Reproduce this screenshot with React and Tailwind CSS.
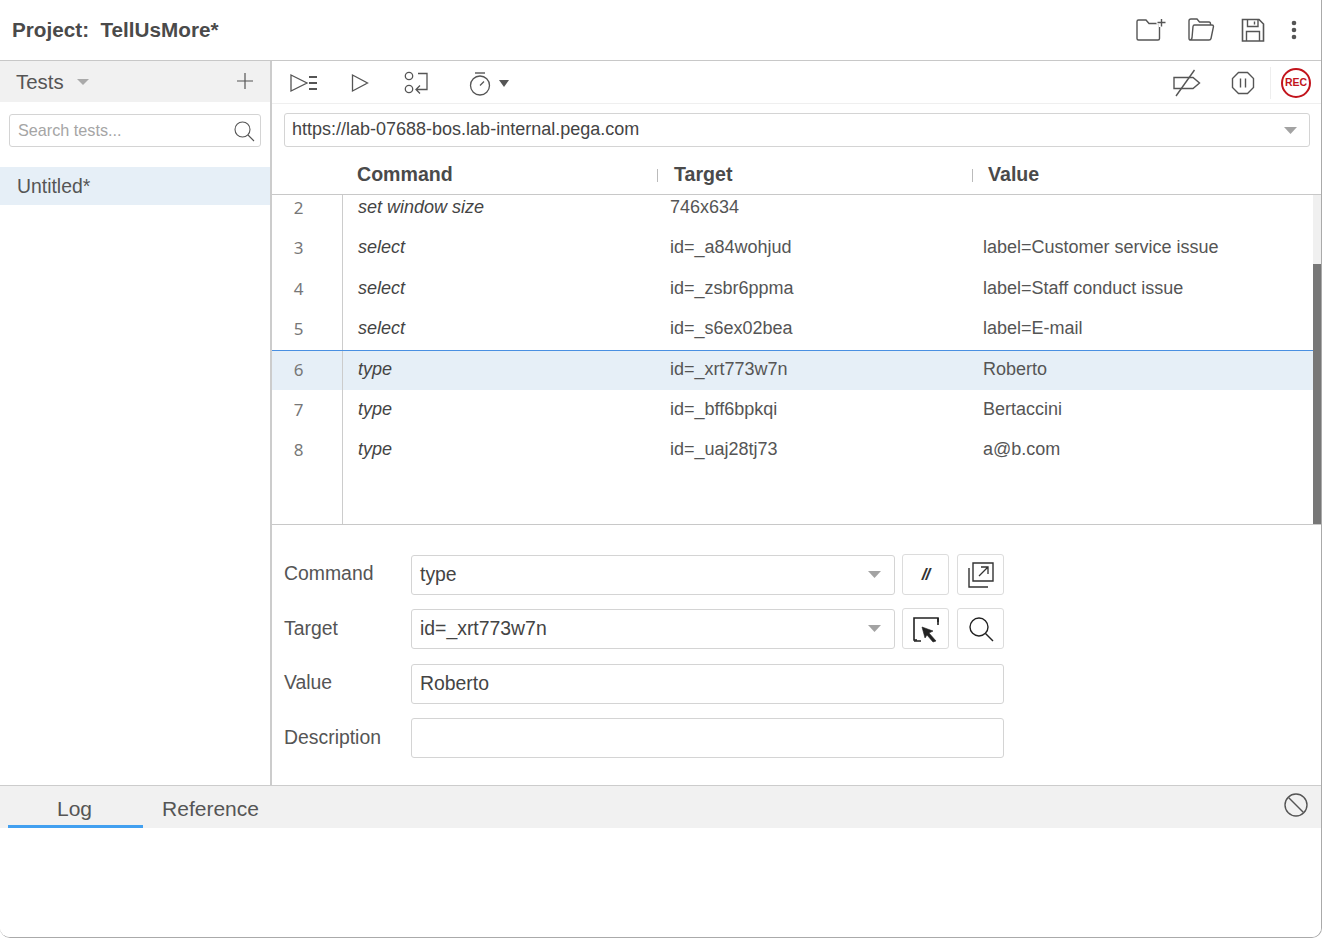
import React from "react";

const Caret = ({ className = "" }) => (
  <svg width="13" height="7" viewBox="0 0 13 7" className={className}><path d="M0 0H13L6.5 7Z" fill="#a3a3a3" /></svg>
);

const Ic = ({ w = 30, h = 30, children, className = "" }) => (
  <svg width={w} height={h} viewBox={`0 0 ${w} ${h}`} fill="none" stroke="#555" strokeWidth="1.5" className={className}>{children}</svg>
);

const rows = [
  ["3", "select", "id=_a84wohjud", "label=Customer service issue"],
  ["4", "select", "id=_zsbr6ppma", "label=Staff conduct issue"],
  ["5", "select", "id=_s6ex02bea", "label=E-mail"],
  ["6", "type", "id=_xrt773w7n", "Roberto", true],
  ["7", "type", "id=_bff6bpkqi", "Bertaccini"],
  ["8", "type", "id=_uaj28tj73", "a@b.com"],
];

function Row({ n, cmd, target, value, selected }) {
  return (
    <div className={`flex items-center shrink-0 h-[40.4px] text-[18px] ${selected ? "bg-[#e6eff7] border-t border-[#4a90e2] box-border" : ""}`}>
      <div className="w-[71px] h-full box-border flex items-center justify-center pr-[17px] pb-[1px] font-['Noto_Sans',sans-serif] text-[17px] text-[#777] border-r border-[#ccc]">{n}</div>
      <div className="w-[327px] pl-[15px] pb-[1.4px] box-border italic text-[#444]">{cmd}</div>
      <div className="w-[313px] pb-[1.4px] box-border text-[#555]">{target}</div>
      <div className="flex-1 pb-[1.4px] box-border text-[#555]">{value}</div>
    </div>
  );
}

const FieldBox = ({ value, caret, w = "w-[484px]", h = "h-[40px]" }) => (
  <div className={`${w} ${h} border border-[#d4d4d4] rounded-[3px] flex items-center justify-between pl-[8px] pr-[13px] text-[19.4px] text-[#444]`}>
    <span>{value}</span>
    {caret && <Caret />}
  </div>
);

const Btn = ({ children, className = "" }) => (
  <div className={`w-[47px] h-[41px] border border-[#dcdcdc] rounded-[3px] flex items-center justify-center ${className}`}>{children}</div>
);

const FormRow = ({ label, children, className = "", labelClass = "" }) => (
  <div className={`flex items-center gap-[8px] ${className}`}>
    <div className={`w-[131px] text-[19.4px] text-[#555] pl-[12px] box-border ${labelClass}`}>{label}</div>
    {children}
  </div>
);

export default function App() {
  return (
    <div className="w-[1322px] h-[938px] bg-white flex flex-col overflow-hidden border-r border-b border-[#aaa] rounded-b-[10px] box-border font-['Liberation_Sans',Arial,sans-serif] text-[#555]">
      <header className="h-[61px] shrink-0 flex items-center justify-between border-b border-[#c8c8c8] box-border pl-[12px] pr-[24px]">
        <div className="font-bold text-[20.7px] text-[#4a4a4a] whitespace-pre">Project:  TellUsMore*</div>
        <div className="flex items-center">
          <Ic w={32} h={28}>
            <path d="M2 5.5Q2 4 3.5 4H11L14 7.5H24.5V22.5Q24.5 24 23 24H3.5Q2 24 2 22.5Z" strokeWidth="1.4" />
            <path d="M26 2V11M21.5 6.5H31" stroke="white" strokeWidth="4" />
            <path d="M26.5 3V10.5M22.5 6.5H30.5" strokeWidth="1.4" />
          </Ic>
          <Ic w={28} h={28} className="ml-[20px]">
            <path d="M3 24Q2 24 2 22V5Q2 3 4 3H10L12.5 6H22Q23.5 6 23.5 8V9" strokeWidth="1.4" />
            <path d="M7.5 9H25Q26.5 9 26.5 10.5L24 22.5Q23.7 24 22 24H3Q4.5 24 5 22L6 10.5Q6.2 9 7.5 9Z" strokeWidth="1.4" />
          </Ic>
          <Ic w={24} h={26} className="ml-[26px]">
            <path d="M1.5 2.5H18L22.5 7V24H1.5Z" strokeWidth="1.6" />
            <path d="M6.5 2.5V9.5H17V2.5M13.5 4.5V7.5" strokeWidth="1.4" />
            <path d="M5.5 24V14.5H18.5V24" strokeWidth="1.4" />
          </Ic>
          <svg width="6" height="20" viewBox="0 0 6 20" className="ml-[26px]" fill="#555"><circle cx="3" cy="3" r="2.3" /><circle cx="3" cy="10" r="2.3" /><circle cx="3" cy="17" r="2.3" /></svg>
        </div>
      </header>

      <div className="flex h-[724px] shrink-0">
        <aside className="w-[272px] shrink-0 border-r-2 border-[#ccc] box-border flex flex-col">
          <div className="h-[41px] bg-[#f1f1f1] flex items-center justify-between pl-[16px] pr-[17px]">
            <div className="flex items-center gap-[13px] pt-[2px]">
              <span className="text-[20.4px] text-[#555]">Tests</span>
              <svg width="12" height="6" viewBox="0 0 12 6"><path d="M0 0H12L6 6Z" fill="#aaa" /></svg>
            </div>
            <svg width="16" height="16" viewBox="0 0 16 16" stroke="#555" strokeWidth="1.2" className="-mt-[2px]"><path d="M8 0V16M0 8H16" /></svg>
          </div>
          <div className="mt-[12px] mx-[9px] h-[33px] border border-[#d4d4d4] rounded-[3px] flex items-center justify-between pl-[8px] pr-[5px]">
            <span className="text-[16.2px] text-[#a5a5a5]">Search tests...</span>
            <Ic w={22} h={22}>
              <circle cx="9.5" cy="9.5" r="7.5" strokeWidth="1.1" />
              <path d="M15 15L21 21" strokeWidth="1.1" />
            </Ic>
          </div>
          <div className="mt-[20px] h-[38px] bg-[#e6eff7] flex items-center pl-[17px] pt-[2px] text-[19.4px] text-[#555]">Untitled*</div>
        </aside>

        <main className="flex-1 flex flex-col min-w-0">
          <div className="h-[43px] shrink-0 border-b border-[#efefef] box-border flex items-center justify-between">
            <div className="flex items-center pt-[2px]">
              <Ic w={30} h={22} className="ml-[17px]">
                <path d="M2 3L18 11L2 19Z" strokeWidth="1.3" />
                <path d="M20 5H28M20 11H28M20 17H28" strokeWidth="1.8" />
              </Ic>
              <Ic w={20} h={22} className="ml-[31px]">
                <path d="M2.5 3L17.5 11L2.5 19Z" strokeWidth="1.3" />
              </Ic>
              <Ic w={28} h={26} className="ml-[33px]">
                <circle cx="6" cy="6" r="3.7" strokeWidth="1.3" />
                <circle cx="6" cy="19" r="3.7" strokeWidth="1.3" />
                <path d="M15 3.5H24V19.5H13M17 15.5L13 19.5L17 23.5" strokeWidth="1.3" />
              </Ic>
              <Ic w={24} h={26} className="ml-[37px] mt-[2px]">
                <path d="M7 2H17" strokeWidth="1.4" />
                <circle cx="12" cy="14.5" r="9.5" strokeWidth="1.3" />
                <path d="M12 14.5L16 10.5" strokeWidth="1.3" />
              </Ic>
              <svg width="10" height="7" viewBox="0 0 10 7" className="ml-[7px]"><path d="M0 0H10L5 7Z" fill="#555" /></svg>
            </div>
            <div className="flex items-center h-full pt-[2px]">
              <Ic w={30} h={28}>
                <path d="M2 8.5H21L27.5 14L21 19.5H2Z" strokeWidth="1.4" />
                <path d="M22.5 1L4 27" strokeWidth="1.4" />
              </Ic>
              <Ic w={24} h={24} className="ml-[29px]">
                <path d="M7.5 1.5H16.5L22.5 7.5V16.5L16.5 22.5H7.5L1.5 16.5V7.5Z" strokeWidth="1.4" />
                <path d="M9.5 7.5V16.5M14.5 7.5V16.5" strokeWidth="1.4" />
              </Ic>
              <div className="ml-[15px] w-[1px] h-[32px] bg-[#eee]"></div>
              <div className="ml-[10px] mr-[10px] w-[30px] h-[30px] rounded-full border-2 border-[#c2141c] flex items-center justify-center text-[10.5px] font-bold text-[#c2141c]">REC</div>
            </div>
          </div>

          <div className="ml-[12px] mr-[11px] mt-[9px] h-[34px] shrink-0 border border-[#d4d4d4] rounded-[3px] flex items-center justify-between pl-[7px] pr-[12px] text-[18px] text-[#444]">
            <span className="-mt-[1px]">https://lab-07688-bos.lab-internal.pega.com</span>
            <Caret />
          </div>

          <div className="mt-[9px] h-[39px] shrink-0 border-b border-[#c8c8c8] box-border flex items-center text-[19.6px] font-bold text-[#4a4a4a]">
            <div className="w-[385px] pl-[85px] box-border">Command</div>
            <div className="w-[1px] h-[13px] bg-[#bbb]"></div>
            <div className="w-[314px] pl-[16px] box-border">Target</div>
            <div className="w-[1px] h-[13px] bg-[#bbb]"></div>
            <div className="flex-1 pl-[15px]">Value</div>
          </div>

          <div className="h-[330px] shrink-0 relative overflow-hidden border-b border-[#c8c8c8] box-border">
            <div className="absolute right-0 top-0 bottom-0 w-[8px] bg-[#f0f0f0]">
              <div className="absolute left-0 right-0 top-[69px] bottom-0 bg-[#777]"></div>
            </div>
            <div className="-mt-[7px] mr-[8px] h-[340px] relative flex flex-col">
              <Row n="2" cmd="set window size" target="746x634" value="" />
              {rows.map((r) => (
                <Row key={r[0]} n={r[0]} cmd={r[1]} target={r[2]} value={r[3]} selected={r[4]} />
              ))}
              <div className="flex-1 w-[71px] border-r border-[#ccc]"></div>
            </div>
          </div>

          <div className="pt-[29px] flex flex-col">
            <FormRow label="Command" labelClass="-mt-[2px]">
              <FieldBox value="type" caret />
              <Btn className="-ml-[1px]">
                <span className="text-[17px] italic font-bold text-[#333] tracking-[-1px]">//</span>
              </Btn>
              <Btn>
                <Ic w={28} h={28}>
                  <path d="M6 2H26V20H6Z" stroke="#333" strokeWidth="1.4" />
                  <path d="M2 7V26H21" stroke="#333" strokeWidth="1.4" />
                  <path d="M12 15L21 6M14 6H21V13" stroke="#333" strokeWidth="1.3" />
                </Ic>
              </Btn>
            </FormRow>
            <FormRow label="Target" className="mt-[13px]">
              <FieldBox value="id=_xrt773w7n" caret />
              <Btn className="-ml-[1px]">
                <Ic w={28} h={28}>
                  <path d="M5 25H2V3H26V10" stroke="#222" strokeWidth="1.6" />
                  <path d="M2 26H9M26 3V7" stroke="#222" strokeWidth="1.6" />
                  <path d="M10 12L21 16L17 18L24 26L21 27L15 20L13 23Z" fill="#222" stroke="#222" strokeWidth="0.6" />
                </Ic>
              </Btn>
              <Btn>
                <Ic w={28} h={28}>
                  <circle cx="12" cy="12" r="9" stroke="#222" strokeWidth="1.4" />
                  <path d="M18.5 18.5L26 26" stroke="#222" strokeWidth="1.4" />
                </Ic>
              </Btn>
            </FormRow>
            <FormRow label="Value" className="mt-[15px]" labelClass="-mt-[2px]">
              <FieldBox value="Roberto" w="w-[593px]" />
            </FormRow>
            <FormRow label="Description" className="mt-[14px]" labelClass="-mt-[1px]">
              <FieldBox value="" w="w-[593px]" />
            </FormRow>
          </div>
        </main>
      </div>

      <div className="h-[43px] shrink-0 bg-[#f1f1f1] border-t border-[#ccc] box-border flex items-stretch justify-between pl-[8px] pr-[12px]">
        <div className="flex">
          <div className="w-[135px] border-b-[3px] border-[#42a0f0] box-border flex items-center justify-center pt-[6px] pr-[2px] text-[21px] text-[#555]">Log</div>
          <div className="w-[135px] box-border flex items-center justify-center text-[21px] text-[#555] pt-[4px]">Reference</div>
        </div>
        <Ic w={26} h={26} className="self-center -mt-[4px]">
          <circle cx="13" cy="13" r="11" strokeWidth="1.4" />
          <path d="M5.5 5.5L20.5 20.5" strokeWidth="1.4" />
        </Ic>
      </div>
      <div className="flex-1 bg-white"></div>
    </div>
  );
}
